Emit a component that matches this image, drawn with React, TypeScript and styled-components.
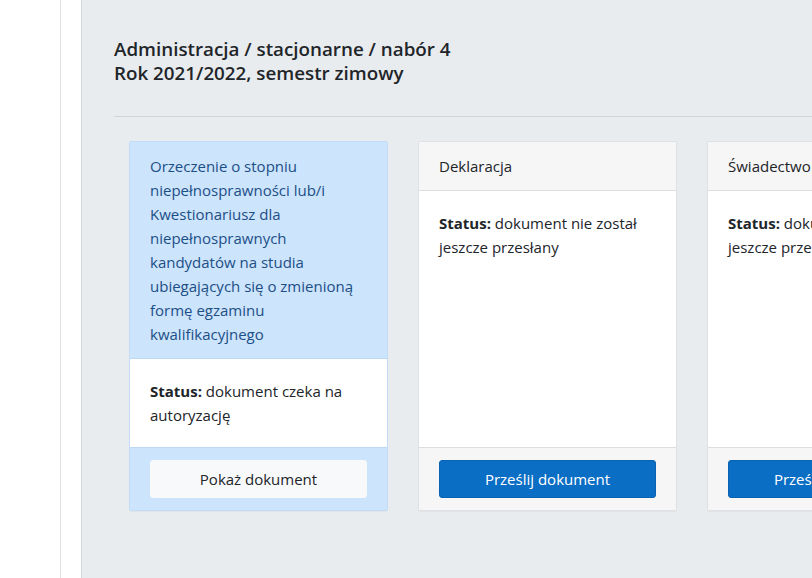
import React from "react";
import styled, { createGlobalStyle } from "styled-components";

const Global = createGlobalStyle`
  *, *::before, *::after { box-sizing: border-box; }
  html, body { margin: 0; padding: 0; height: 100%; overflow: hidden; }
  body { font-family: "Open Sans", "Noto Sans", sans-serif; color: #212529; background: #fff; }
  #root { height: 100%; }
`;

const Layout = styled.div`
  display: flex;
  height: 578px;
  width: 812px;
  overflow: hidden;
`;

const Sidebar = styled.aside`
  flex: 0 0 61px;
  background: #fff;
  border-right: 1px solid #dee2e6;
`;

const Gutter = styled.div`
  flex: 0 0 20px;
  background: #fff;
`;

const Main = styled.main`
  flex: 1 1 auto;
  min-width: 0;
  background: #e9ecef;
  border-left: 1px solid #d6dadf;
  padding: 37px 0 0 32px;
  overflow: hidden;
`;

const Title = styled.h1`
  margin: 0;
  font-size: 18.8px;
  line-height: 24px;
  font-weight: 600;
  color: #212529;
  white-space: nowrap;
`;

const Rule = styled.hr`
  margin: 31px 0 24px;
  border: 0;
  border-top: 1px solid #cfd4d9;
  width: 800px;
`;

const Row = styled.div`
  display: flex;
  align-items: stretch;
  gap: 30px;
  padding-left: 15px;
`;

const Card = styled.div<{ $info?: boolean }>`
  flex: 0 0 259px;
  display: flex;
  flex-direction: column;
  background: #fff;
  border: 1px solid ${(p) => (p.$info ? "#c2dcf7" : "#dfe1e4")};
  border-radius: 2px;
  box-shadow: 0 1px 1px rgba(0, 0, 0, 0.03);
`;

const Header = styled.div<{ $info?: boolean }>`
  padding: 12px 20px;
  font-size: 15px;
  line-height: 24px;
  background: ${(p) => (p.$info ? "#cce4fc" : "#f6f6f6")};
  color: ${(p) => (p.$info ? "#1c4f86" : "#212529")};
  border-bottom: 1px solid ${(p) => (p.$info ? "#bcd8f5" : "#dcdee1")};
  white-space: nowrap;
`;

const Body = styled.div`
  flex: 1 1 auto;
  padding: 20px 20px;
  font-size: 15px;
  line-height: 24px;
`;

const Footer = styled.div<{ $info?: boolean }>`
  padding: 12px 20px;
  background: ${(p) => (p.$info ? "#cce4fc" : "#f6f6f6")};
  border-top: 1px solid ${(p) => (p.$info ? "#bcd8f5" : "#dcdee1")};
`;

const Button = styled.button<{ $variant: "light" | "primary" }>`
  display: block;
  width: 100%;
  height: 38px;
  font-family: inherit;
  font-size: 15px;
  border-radius: 3px;
  cursor: pointer;
  background: ${(p) => (p.$variant === "primary" ? "#0b6ec5" : "#f8f9fa")};
  color: ${(p) => (p.$variant === "primary" ? "#fff" : "#212529")};
  border: 1px solid ${(p) => (p.$variant === "primary" ? "#0a62b0" : "#f8f9fa")};
  white-space: nowrap;
  overflow: hidden;
`;

type Doc = {
  title: React.ReactNode;
  status: string;
  info?: boolean;
  action: string;
};

const docs: Doc[] = [
  {
    title: (
      <>
        Orzeczenie o stopniu
        <br />
        niepełnosprawności lub/i
        <br />
        Kwestionariusz dla
        <br />
        niepełnosprawnych
        <br />
        kandydatów na studia
        <br />
        ubiegających się o zmienioną
        <br />
        formę egzaminu
        <br />
        kwalifikacyjnego
      </>
    ),
    status: "dokument czeka na autoryzację",
    info: true,
    action: "Pokaż dokument",
  },
  {
    title: "Deklaracja",
    status: "dokument nie został jeszcze przesłany",
    action: "Prześlij dokument",
  },
  {
    title: "Świadectwo dojrzałości",
    status: "dokument nie został jeszcze przesłany",
    action: "Prześlij dokument",
  },
];

export default function App() {
  return (
    <>
      <Global />
      <Layout>
        <Sidebar />
        <Gutter />
        <Main>
          <Title>
            Administracja / stacjonarne / nabór 4
            <br />
            Rok 2021/2022, semestr zimowy
          </Title>
          <Rule />
          <Row>
            {docs.map((d, i) => (
              <Card key={i} $info={d.info}>
                <Header $info={d.info}>{d.title}</Header>
                <Body>
                  <strong>Status:</strong> {d.status}
                </Body>
                <Footer $info={d.info}>
                  <Button $variant={d.info ? "light" : "primary"}>{d.action}</Button>
                </Footer>
              </Card>
            ))}
          </Row>
        </Main>
      </Layout>
    </>
  );
}
